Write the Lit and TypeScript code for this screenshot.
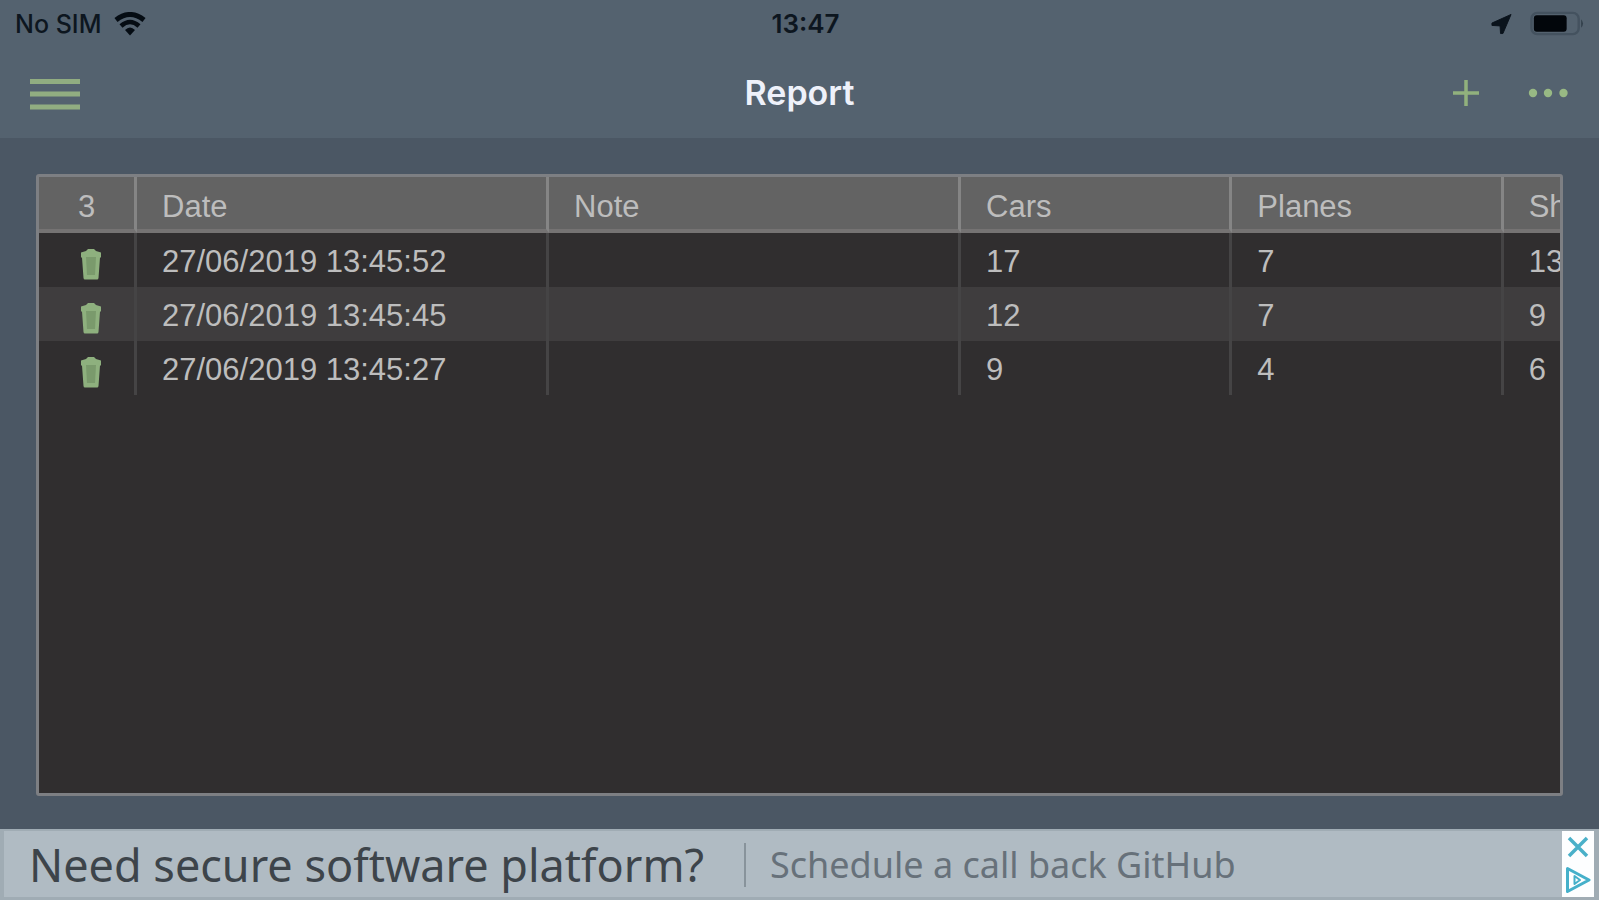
import { LitElement, html, css } from "lit";
import { customElement, state } from "lit/decorators.js";

interface Entry {
  date: string;
  note: string;
  counts: number[];
}

@customElement("status-bar")
class StatusBar extends LitElement {
  static styles = css`
    :host {
      display: grid;
      grid-template-columns: 1fr auto 1fr;
      align-items: center;
      height: 48px;
      padding: 0 15px;
      color: #0d161f;
      font: 500 25px/32px Inter, "Liberation Sans", sans-serif;
    }
    .side {
      display: flex;
      align-items: center;
      gap: 13px;
    }
    .time {
      padding-left: 12px;
      font-weight: 600;
      font-size: 26px;
    }
    .end {
      justify-content: flex-end;
      gap: 18px;
    }
    svg {
      display: block;
    }
  `;
  render() {
    return html`
      <div class="side">
        <span>No SIM</span>
        <svg width="32" height="24" viewBox="0 0 32 24" fill="none" stroke="#050c13" aria-hidden="true">
          <path d="M2 8Q16-3 30 8" stroke-width="5" />
          <path d="M7 14Q16 6 25 14" stroke-width="4.500" />
          <path d="M11 18Q16 13 21 18L16 23.500Z" fill="#050c13" stroke="none" />
        </svg>
      </div>
      <span class="time">13:47</span>
      <div class="side end">
        <svg width="21" height="22" viewBox="0 0 22 22" aria-hidden="true">
          <path d="M21 1L1 10L1 12.500L9.500 13L10 21H12.500Z" fill="#0a131c" stroke="#0a131c" stroke-linejoin="round" />
        </svg>
        <svg width="54" height="26" viewBox="0 0 56 26" aria-hidden="true">
          <rect x="1.500" y="1.500" width="49" height="22" rx="6" fill="none" stroke="#44525f" stroke-width="2.500" />
          <rect x="4" y="4" width="34" height="17" rx="3" fill="#02060b" />
          <path d="M53 8Q57 12.500 53 17Z" fill="#33404c" />
        </svg>
      </div>
    `;
  }
}

@customElement("nav-bar")
class NavBar extends LitElement {
  static styles = css`
    :host {
      display: grid;
      grid-template-columns: 1fr auto 1fr;
      align-items: center;
      height: 90px;
      padding: 0 26px;
    }
    h1 {
      margin: 0;
      color: #eef1fa;
      font: 600 34px/44px Inter, "Liberation Sans", sans-serif;
    }
    button {
      display: block;
      padding: 4px;
      border: 0;
      background: none;
      cursor: pointer;
    }
    .actions {
      display: flex;
      align-items: center;
      justify-content: flex-end;
      gap: 40px;
    }
    svg {
      display: block;
    }
  `;
  render() {
    return html`
      <div>
        <button aria-label="Menu">
          <svg width="50" height="34" viewBox="0 0 50 34" stroke="#91ad81" stroke-width="5">
            <path d="M0 5.500H50M0 18H50M0 31H50" />
          </svg>
        </button>
      </div>
      <h1>Report</h1>
      <div class="actions">
        <button aria-label="Add">
          <svg width="26" height="26" viewBox="0 0 26 26" stroke="#91b17d" stroke-width="3.500">
            <path d="M0 13H26M13 0V26" />
          </svg>
        </button>
        <button aria-label="More">
          <svg width="42" height="12" viewBox="0 0 42 12" fill="#98b984">
            <circle cx="6" cy="6" r="4.200" />
            <circle cx="21" cy="6" r="4.200" />
            <circle cx="36.500" cy="6" r="4.200" />
          </svg>
        </button>
      </div>
    `;
  }
}

@customElement("report-table")
class ReportTable extends LitElement {
  static styles = css`
    :host {
      display: block;
      overflow: hidden;
      border: 3px solid #7d7f83;
      border-radius: 3px;
      background: #302e2f;
      color: #bdbdbd;
      font: 31px/36px "Liberation Sans", Arial, sans-serif;
    }
    table {
      width: 1736px;
      table-layout: fixed;
      border-collapse: separate;
      border-spacing: 0;
    }
    th,
    td {
      box-sizing: border-box;
      height: 54px;
      padding: 3px 0 0 25px;
      border-right: 3px solid #454445;
      text-align: left;
      white-space: nowrap;
      font-weight: 400;
    }
    th {
      height: 56px;
      padding-top: 8px;
      background: #636363;
      border-right-color: #858585;
      border-bottom: 4px solid #757373;
    }
    tbody tr:nth-child(even) {
      background: #3f3d3e;
    }
    .tool {
      width: 98px;
    }
    .wide {
      width: 412px;
    }
    th:first-child {
      padding-left: 0;
      text-align: center;
    }
    td:first-child {
      padding: 8px 0 0 9px;
    }
    button {
      display: block;
      margin: 0 auto;
      padding: 0;
      border: 0;
      background: none;
      cursor: pointer;
    }
    svg {
      display: block;
    }
  `;

  @state() private entries: Entry[] = [
    { date: "27/06/2019 13:45:52", note: "", counts: [17, 7, 13] },
    { date: "27/06/2019 13:45:45", note: "", counts: [12, 7, 9] },
    { date: "27/06/2019 13:45:27", note: "", counts: [9, 4, 6] },
  ];

  private remove(entry: Entry) {
    this.entries = this.entries.filter((e) => e !== entry);
  }

  render() {
    return html`
      <table>
        <colgroup>
          <col class="tool" />
          <col class="wide" />
          <col class="wide" />
          <col />
          <col />
          <col />
        </colgroup>
        <thead>
          <tr>
            <th scope="col">${this.entries.length}</th>
            <th scope="col">Date</th>
            <th scope="col">Note</th>
            <th scope="col">Cars</th>
            <th scope="col">Planes</th>
            <th scope="col">Ships</th>
          </tr>
        </thead>
        <tbody>
          ${this.entries.map(
            (e) => html`<tr>
              <td>
                <button aria-label="Delete ${e.date}" @click=${() => this.remove(e)}>
                  <svg width="22" height="32" viewBox="0 0 22 32">
                    <path d="M1 4.500L6 3L8 1H14L16 3L21 4.500V9.500H20L18.500 30Q18.300 31.500 17 31.500H5Q3.700 31.500 3.500 30L2 9.500H1Z" fill="#8eb07e" />
                    <path d="M6 9H16L15 27H7Z" fill="#7a9a6c" />
                  </svg>
                </button>
              </td>
              <td>${e.date}</td>
              <td>${e.note}</td>
              ${e.counts.map((c) => html`<td>${c}</td>`)}
            </tr>`
          )}
        </tbody>
      </table>
    `;
  }
}

@customElement("ad-banner")
class AdBanner extends LitElement {
  static styles = css`
    :host {
      display: flex;
      align-items: center;
      box-sizing: border-box;
      height: 71px;
      padding-left: 25px;
      border: solid #a0acb4;
      border-width: 2px 5px 3px 4px;
      background: #b0bbc3;
      font-family: "Noto Sans", "Open Sans", sans-serif;
      white-space: nowrap;
    }
    .copy {
      display: flex;
      flex: 1;
      align-items: center;
      padding-top: 2px;
      text-decoration: none;
    }
    .lead {
      color: #3d444a;
      font-size: 45px;
      line-height: 64px;
    }
    .rest {
      margin-left: 40px;
      padding-left: 24px;
      border-left: 2px solid #88939b;
      color: #67717a;
      font-size: 36px;
      line-height: 44px;
    }
    .controls {
      display: flex;
      flex-direction: column;
      justify-content: space-around;
      align-items: center;
      align-self: stretch;
      width: 32px;
      background: #fdfeff;
    }
    button {
      display: block;
      padding: 0;
      border: 0;
      background: none;
      cursor: pointer;
    }
    svg {
      display: block;
    }
  `;
  render() {
    return html`
      <a class="copy" href="#">
        <span class="lead">Need secure software platform?</span>
        <span class="rest">Schedule a call back GitHub</span>
      </a>
      <div class="controls">
        <button aria-label="Close ad">
          <svg width="24" height="24" viewBox="0 0 24 24" fill="none" stroke="#4ab0c9" stroke-width="3.500">
            <path d="M3 3L21 21M21 3L3 21" />
          </svg>
        </button>
        <button aria-label="Ad choices">
          <svg width="26" height="28" viewBox="0 0 26 28" fill="none" stroke="#45b0ca" stroke-width="3" stroke-linejoin="round">
            <path d="M2.500 2.500L24 14L2.500 25.500Z" />
            <path d="M9.500 10V18L15 14Z" stroke-width="2" />
          </svg>
        </button>
      </div>
    `;
  }
}

@customElement("app-root")
class AppRoot extends LitElement {
  static styles = css`
    :host {
      display: flex;
      flex-direction: column;
      height: 100vh;
      overflow: hidden;
      background: #4b5764;
    }
    header {
      background: #54626f;
    }
    main {
      display: flex;
      flex: 1;
      min-height: 0;
      padding: 36px 36px 33px;
    }
    report-table {
      flex: 1;
      min-width: 0;
    }
  `;
  render() {
    return html`
      <header>
        <status-bar></status-bar>
        <nav-bar></nav-bar>
      </header>
      <main>
        <report-table></report-table>
      </main>
      <ad-banner></ad-banner>
    `;
  }
}
